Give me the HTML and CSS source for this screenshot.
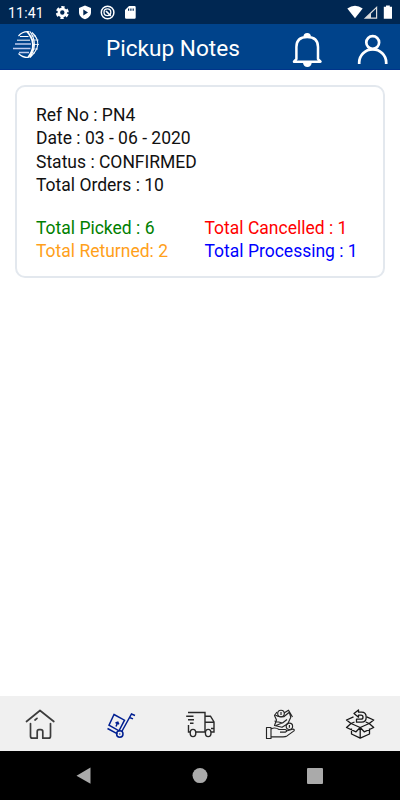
FILE: index.html
```html
<!DOCTYPE html>
<html lang="en">
<head>
<meta charset="utf-8">
<title>Pickup Notes</title>
<link rel="stylesheet" href="styles.css">
</head>
<body>
<div class="status">
  <span class="clock">11:41</span>
  <svg class="status-left" viewBox="54 0 84 24">
    <g fill="none" stroke="#fff">
      <circle cx="62.3" cy="12.5" r="3.5" stroke-width="2.6"/>
      <circle cx="62.3" cy="12.5" r="5.3" stroke-width="2.4" stroke-dasharray="3.2 2.35" stroke-dashoffset="-1.2"/>
      <circle cx="107.6" cy="12.5" r="6.3" stroke-width="1.5"/>
      <circle cx="107.4" cy="12.2" r="3.4" stroke-width="1.3"/>
      <path d="M106 11l4.8 4.8" stroke-width="1.7"/>
    </g>
    <path fill="#fff" fill-rule="evenodd" d="M85 5.6l6 2.4v4.6c0 3-2.5 5.7-6 6.7-3.500-1-6-3.700-6-6.700V8zM83.300 9.500v6l4.700-3z"/>
    <path fill="#fff" fill-rule="evenodd" d="M129 6h5.500q1.200 0 1.200 1.200v10.300q0 1.200-1.200 1.200h-8.300q-1.200 0-1.200-1.200V10zM128 8.500v2.300h1.200V8.500zM130.300 8.500v2.300h1.200V8.500zM132.600 8.500v2.300h1.200V8.500z"/>
  </svg>
  <svg class="status-right" viewBox="346 0 48 24">
    <path fill="#fff" d="M347.300 8.500q7.700-5.500 15.400 0L355 18.300z"/>
    <path fill="none" stroke="#ddd" stroke-width="1.200" d="M376.600 7.300v10.900h-11.300z"/>
    <path fill="#ddd" d="M371 12.700v5.300h-5.300z"/>
    <path fill="#fff" d="M386 5.500h3.800v1.300h2.200v12h-8.200v-12h2.200z"/>
  </svg>
</div>
<header class="header">
  <svg class="logo" viewBox="10 28 34 34">
    <g fill="none" stroke="#fff">
      <path d="M18.500 36Q23 30.700 29.500 31.800M18.500 53.500q4 4.200 10 4" stroke-width="1.200"/>
      <path d="M27 31.500Q38.500 44.500 28 57.500" stroke-width="1.800"/>
      <path d="M30 31.500q9 13-.5 26M32 32.500q12.500 11.500-2 25" stroke-width="1.100"/>
      <path d="M31 36h5M32 40h6.500M32 44.500h7M32 49h6M31 53h4" stroke-width=".8"/>
      <path d="M20 36.500h8.500M17 40.200h13" stroke-width="1"/>
      <path d="M15 44h16M13 48.500h17.500M19 52.500h10" stroke="#bfcbed" stroke-width="1.500"/>
    </g>
  </svg>
  <h1 class="title">Pickup Notes</h1>
  <svg class="bell" viewBox="290 30 34 38" fill="none" stroke="#fff">
    <path d="M296.400 59V47q0-10 10.800-10T318 47v12l2.500 2.700H294z" stroke-width="2.500" stroke-linejoin="round"/>
    <path d="M303 63h8.700q-.7 4.100-4.300 4.100T303 63zM303.500 36.500q0-3.500 3.700-3.500t3.700 3.500z" fill="#fff" stroke="none"/>
  </svg>
  <svg class="user" viewBox="354 30 36 38" fill="none" stroke="#fff" stroke-width="2.700">
    <circle cx="372.700" cy="42.500" r="6.400"/>
    <path d="M359.200 64v-1.500a13.500 13.200 0 0 1 27 0V64"/>
  </svg>
</header>
<main class="content">
  <section class="card">
    <div>Ref No : PN4</div>
    <div>Date : 03 - 06 - 2020</div>
    <div>Status : CONFIRMED</div>
    <div>Total Orders : 10</div>
    <div class="totals">
      <span class="picked">Total Picked : 6</span>
      <span class="cancelled">Total Cancelled : 1</span>
      <span class="returned">Total Returned: 2</span>
      <span class="processing">Total Processing : 1</span>
    </div>
  </section>
</main>
<nav class="tabs">
  <svg viewBox="20 704 40 40" stroke="#3c3c3c" stroke-width="1.700" stroke-linecap="round" stroke-linejoin="round">
    <path d="M26.500 721.500L40 710.500l13.800 11M30.500 723.500v12.700q0 2 2 2h4.700v-6.500q0-2 1.800-2h1.800q2 0 2 2v6.500h5.700q2 0 2-2v-12.700M35 720l2-1.600"/>
  </svg>
  <svg viewBox="100 704 40 40" stroke="#001f91" stroke-width="1.500">
    <path d="M114 714.500l10.500 5.700-5.500 10.600-10-5.600zM107.500 728.500l10 5.300M121.800 731.500l9.700-17.500 3.500 1.500M129.500 717.500l3.500 1.400"/>
    <circle cx="119.800" cy="734" r="3.200"/>
    <path d="M116 726.500l1.700-4M115.500 723l2.300-.8 1 2.200"/>
    <path d="M119.300 733.900h1"/>
  </svg>
  <svg viewBox="180 704 40 40" stroke="#292929" stroke-width="1.400">
    <path d="M188 712.500h17V732M186.200 716.200h7.300M188 719.700h6M190 723.300h3.500M188.500 725v7h2M196 732h9.500M211 732h3v-10l-3.500-5.800H205M205 722.300h9M211 728.500h3"/>
    <ellipse cx="193" cy="733" rx="2.800" ry="3.600"/>
    <ellipse cx="208.200" cy="733" rx="2.800" ry="3.600"/>
  </svg>
  <svg viewBox="260 704 40 40" stroke="#252525" stroke-width="1.150" stroke-linejoin="round">
    <path d="M266.500 727.500h4.500v11h-4.500zM271 729q4-2.200 8 .5h6q2 .2 1.500 1.700l-1 .9h-5.500M286.500 731l6-1.800q2.500-.2 1.500 1.700l-7 5q-1.500.9-4 .9h-12"/>
    <path d="M277 712l-2.500 3.500 2 4.500-2 5.500 7.500 1.800 5.800-3.500 3-6.500-1.500-5-5.500 4.500-5.500-.3-3.800-2M274.500 721l8 2 4.500-3.500M284 713l4.500-2.800 4 6.800M276 725.500l6-2.500"/>
    <circle cx="281" cy="713.500" r="3.300"/>
    <circle cx="289.400" cy="726.300" r="3.200"/>
    <path d="M281 712v3M289.400 725v2.700"/>
  </svg>
  <svg viewBox="340 704 40 40" stroke="#171717" stroke-width="1.300" stroke-linejoin="round">
    <path d="M351.500 728.500v5.500l8.700 4.200 9.300-4.200v-5.500M360.200 727.500v10.700M360.200 727.500l-9.200-4-4.500 4 9.500 4.300zM360.200 727.500l9-4 4.500 4-9.500 4.300zM351 723.500l-4.500-3.500 7-3.200M369.200 723.500l4.500-3.500-7-3.200M351 723.500l3.500-1.500M369.200 723.500l-3.500-1.500"/>
    <path d="M354 713.500l4.500-3.500v2.200h3q4.700 0 4.700 5t-4.700 5h-5v-3h4.500q2 0 2-2t-2-2h-2.500v2z"/>
  </svg>
</nav>
<footer class="system">
  <svg viewBox="70 760 30 30"><path d="M76.500 775.700l14-8.200v16.200z"/></svg>
  <svg viewBox="185 760 30 30"><circle cx="200" cy="775.600" r="7.500"/></svg>
  <svg viewBox="300 760 30 30"><rect x="307" y="768" width="16" height="16" rx="1"/></svg>
</footer>
</body>
</html>
```
FILE: styles.css
```css
* { box-sizing: border-box; }
body {
  margin: 0;
  height: 800px;
  display: flex;
  flex-direction: column;
  overflow: hidden;
  background: #fff;
  color: #000;
  font-family: Roboto, sans-serif;
}
svg { display: block; flex: none; }
.status {
  height: 24px;
  flex: none;
  display: flex;
  align-items: center;
  padding: 0 6px 0 8px;
  background: #002752;
  color: #fff;
}
.clock { width: 46px; font-size: 14px; letter-spacing: .2px; line-height: 24px; padding-top: 1px; }
.status-left { width: 84px; height: 24px; }
.status-right { width: 48px; height: 24px; margin-left: auto; }
.header {
  height: 46px;
  flex: none;
  display: flex;
  align-items: flex-start;
  padding: 4px 10px 0;
  background: #00438b;
  border-bottom: 1px solid #00348b;
  color: #fff;
}
.logo { width: 34px; height: 34px; }
.title {
  margin: 7px 0 0 62px;
  width: 184px;
  font-size: 22.600px;
  font-weight: 400;
  line-height: 28px;
}
.bell { width: 34px; height: 38px; margin-top: 2px; }
.user { width: 36px; height: 38px; margin: 2px 0 0 30px; }
.content { flex: 1; padding: 15px 15px 0; }
.card {
  height: 193px;
  padding: 17px 19px 0;
  border: 2px solid #e3e8ee;
  border-radius: 10px;
  font-size: 17.500px;
  line-height: 23.300px;
  font-weight: 400;
  color: #111;
}
.totals {
  display: grid;
  grid-template-columns: 168.500px 1fr;
  margin-top: 19.500px;
  white-space: nowrap;
}
.picked { color: #008000; }
.cancelled { color: #f00; }
.returned { color: #ffa01a; }
.processing { color: #00f; }
.tabs {
  height: 55px;
  flex: none;
  display: flex;
  justify-content: space-around;
  padding-top: 8px;
  background: #f0f0f0;
}
.tabs svg { width: 40px; height: 40px; fill: none; }
.system {
  height: 49px;
  flex: none;
  display: flex;
  justify-content: space-between;
  padding: 9px 70px 0;
  background: #000;
}
.system svg { width: 30px; height: 30px; fill: #aaa; }
```
